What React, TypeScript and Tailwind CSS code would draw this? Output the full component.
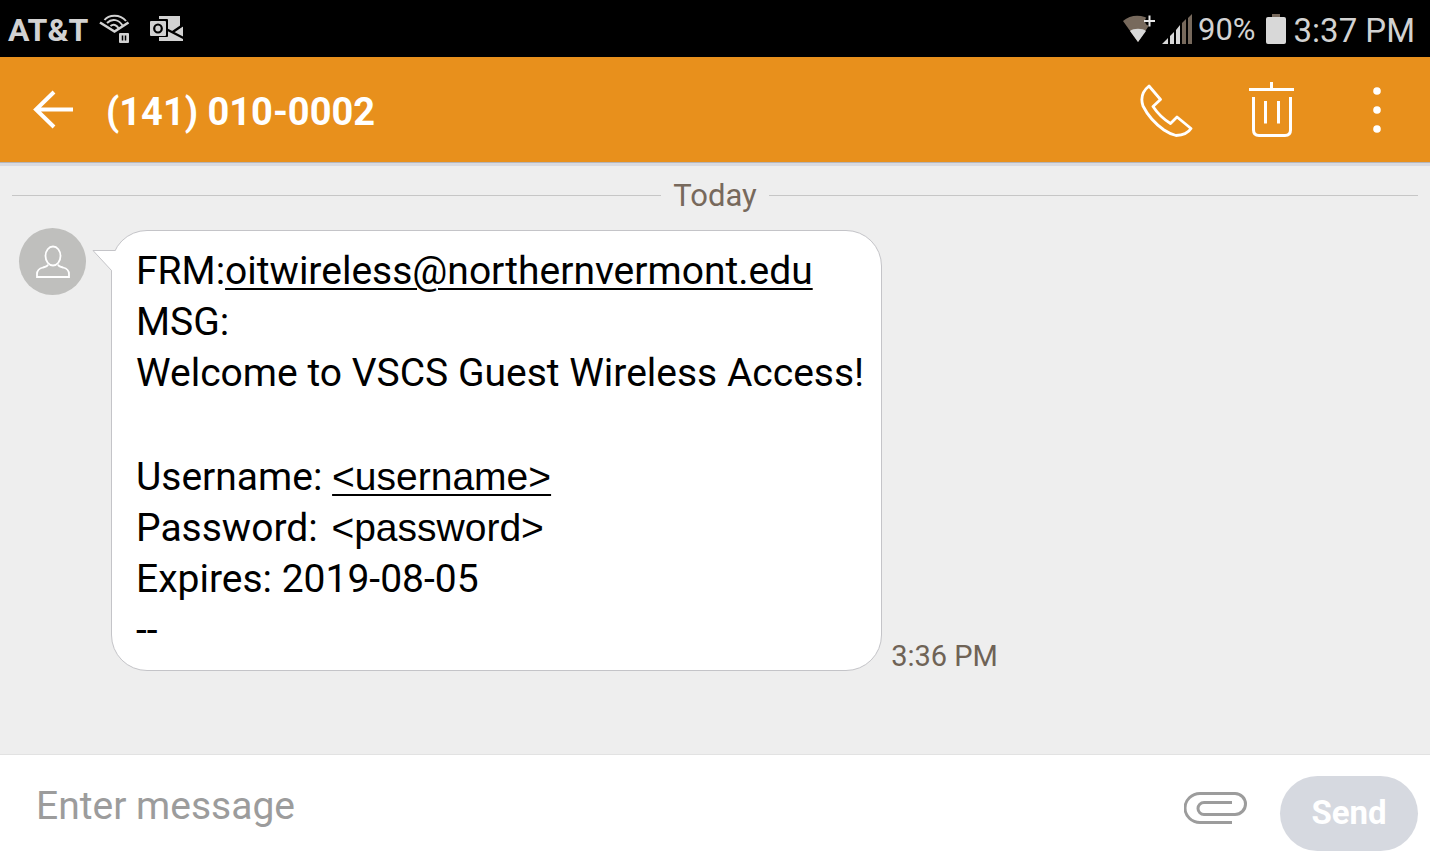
import { useState } from 'react';

function StatusBar() {
  return (
    <div className="flex h-[57px] items-center justify-between bg-black pl-2 pr-[15px] text-[#d2d2d2]">
      <div className="flex items-center">
        <span className="pt-[2px] text-[32px] font-bold leading-10">AT&amp;T</span>
        {/* Wi-Fi paused */}
        <svg className="ml-[11px] h-8 w-8" viewBox="0 0 32 32" fill="none" stroke="currentColor" strokeWidth="2">
          <path d="M1 9.500 15.500 18.500 29.500 9.500" strokeWidth="2.600" />
          <path d="M5.500 7C9.500 1.500 21 0.500 27 8" />
          <path d="M8 10C13 5 20 6.500 23.500 12.500" />
          <path d="M11.500 13C14.500 10.500 17.500 12 19.500 15" />
          <rect x="20" y="20" width="10" height="10" rx="1" fill="currentColor" stroke="none" />
          <path d="M23.500 22.500v5M26.500 22.500v5" stroke="#000" strokeWidth="1.500" />
        </svg>
        {/* Outlook */}
        <svg className="ml-[19px] h-8 w-8 overflow-visible" viewBox="0 0 32 32">
          <path d="M9 3h21v12l3-2v15H9z" fill="currentColor" />
          <path d="M16 16 33.500 25M22 19.500 33 12" stroke="#000" strokeWidth="2.400" />
          <rect x="-1" y="6" width="19" height="18" rx="1" fill="#000" />
          <rect x="0" y="8" width="16" height="15" rx="1" fill="currentColor" />
          <ellipse cx="8" cy="15.500" rx="3.800" ry="4" fill="none" stroke="#000" strokeWidth="2.200" />
        </svg>
      </div>
      <div className="flex items-center">
        <svg className="h-8 w-8 overflow-visible" viewBox="0 0 32 32">
          <path d="M0 8C8 1 20 1 29 8L15 29z" fill="#77695c" />
          <path d="M7 18C10 15 20 15 23 18L15 29z" fill="#d8d8d8" />
          <circle cx="27" cy="8" r="5" fill="#000" />
          <path d="M26.500 2.500v11M21 8h11" stroke="#e8e8e8" strokeWidth="2" />
        </svg>
        <svg className="ml-[7px] h-8 w-8" viewBox="0 0 32 32" fill="#d8d8d8">
          <path d="M0 31 6 25v6zM8 23l4-4v12H8zM14 17l4-5v19h-4z" />
          <path d="M20 10l4-4v25h-4zM26 5l4-4v30h-4z" fill="#77695c" />
        </svg>
        <span className="ml-1 pt-[2px] text-[31px] leading-10">90%</span>
        <svg className="ml-[10px] h-8 w-5" viewBox="0 0 20 32">
          <path d="M6 1h8v4H6z" fill="#77695c" />
          <rect x="0" y="4" width="20" height="27" rx="2" fill="#d8d8d8" />
        </svg>
        <span className="ml-2 pt-1 text-[33px] leading-10">3:37 PM</span>
      </div>
    </div>
  );
}

function Header() {
  return (
    <header className="relative z-10 flex h-[105px] items-center bg-[#e8901c] pr-[45px] pl-8 text-white shadow-[0_1px_0_#b5b5b9,0_4px_0_#d8dae1]">
      <button type="button" aria-label="Back">
        <svg className="h-12 w-11" viewBox="0 0 44 48" fill="none" stroke="currentColor" strokeWidth="4">
          <path d="M41 23.500H4M22 6 4 23.500 22 41" />
        </svg>
      </button>
      <h1 className="ml-[30px] flex-1 pt-1 text-[38px] leading-[52px] font-bold">(141) 010-0002</h1>
      <div className="flex items-center">
        <button type="button" aria-label="Call">
          <svg className="h-14 w-14" viewBox="0 0 56 56" fill="none" stroke="currentColor" strokeWidth="2.800" strokeLinejoin="round">
            <path d="M9 4 20.500 17.500 13 24.500Q20 35 30.500 41.500L37 35 51 46.500Q47 53 36 53.500Q30 52 24 48Q10 38 3 24Q-1 12 9 4z" />
          </svg>
        </button>
        <button type="button" aria-label="Delete" className="ml-[53px]">
          <svg className="h-14 w-12" viewBox="0 0 48 56" fill="none" stroke="currentColor" strokeWidth="3">
            <path d="M0 7.500h45M22.500 0v7.500M4.500 15v33Q4.500 53.500 10 53.500H36Q41.500 53.500 41.500 48V15M16.500 19v22.500M29.500 19v22.500" />
          </svg>
        </button>
        <button type="button" aria-label="More options" className="ml-[72px]">
          <svg className="h-14 w-4" viewBox="0 0 16 56" fill="currentColor">
            <circle cx="8" cy="9" r="3.800" />
            <circle cx="8" cy="28" r="3.800" />
            <circle cx="8" cy="47" r="3.800" />
          </svg>
        </button>
      </div>
    </header>
  );
}

function Message() {
  return (
    <div className="flex items-end pl-[19px]">
      <div className="mr-[25px] flex size-[67px] shrink-0 items-center justify-center self-start rounded-full bg-[#bfbfbd]">
        <svg className="size-9" viewBox="0 0 36 36" fill="none" stroke="#fff" strokeWidth="1.800">
          <ellipse cx="18" cy="12" rx="7.500" ry="9.500" />
          <path d="M13 20.500Q12.500 22.500 8 23.500Q2 25 2 30v3h32v-3Q34 25 28 23.500Q23.500 22.500 23 20.500" />
        </svg>
      </div>
      <div className="relative mt-[2px] rounded-[36px] border border-[#c4c4c8] bg-white pt-[15px] pr-[17px] pb-[14px] pl-6 text-[39px] leading-[51px] text-black">
        <svg className="absolute top-[18px] -left-5 h-6 w-8" viewBox="0 0 32 24">
          <path d="M24 1.500H1L19.500 21.500 23 22 32 2z" fill="#fff" />
          <path d="M23.500 1.500H1L19.500 21.500V24" fill="none" stroke="#c4c4c8" />
        </svg>
        <p>
          FRM:
          <a href="mailto:oitwireless@northernvermont.edu" className="underline decoration-2 underline-offset-4">
            oitwireless@northernvermont.edu
          </a>
        </p>
        <p>MSG:</p>
        <p>Welcome to VSCS Guest Wireless Access!</p>
        <p className="mt-[53px]">
          Username:{' '}
          <a href="#username" className="font-['Liberation_Sans',sans-serif] leading-none underline decoration-2 underline-offset-4">
            &lt;username&gt;
          </a>
        </p>
        <p>
          Password:{' '}
          <span className="ml-1 font-['Liberation_Sans',sans-serif] leading-none">&lt;password&gt;</span>
        </p>
        <p>Expires: 2019-08-05</p>
        <p>--</p>
      </div>
      <time className="ml-[9px] text-[29px] leading-[30px] text-[#6f6356]">3:36 PM</time>
    </div>
  );
}

function Composer() {
  const [text, setText] = useState('');

  return (
    <form
      className="flex h-[107px] items-center border-t border-[#e2e2e2] bg-white pr-3 pl-9"
      onSubmit={(e: React.FormEvent) => {
        e.preventDefault();
        setText('');
      }}
    >
      <input
        type="text"
        aria-label="Message"
        placeholder="Enter message"
        className="h-14 min-w-0 flex-1 bg-transparent pb-1 text-[39px] outline-none placeholder:text-[#9c9c9c]"
        value={text}
        onChange={e => setText(e.target.value)}
      />
      <button type="button" aria-label="Attach file">
        <svg className="h-9 w-16" viewBox="0 0 64 36" fill="none" stroke="#9c9c9c" strokeWidth="3">
          <path d="M48 32.500H16A15 14.500 0 0 1 16 3.500H51A10 10 0 0 1 51 24.500H20A5.500 5.500 0 0 1 20 12.500H48" />
        </svg>
      </button>
      <button type="submit" className="mt-[10px] ml-8 h-[75px] w-[138px] rounded-full bg-[#d6d9e0] text-[33px] font-bold text-white">
        Send
      </button>
    </form>
  );
}

export default function App() {
  return (
    <div className="flex min-h-screen flex-col bg-[#eeeeee] font-[Roboto,sans-serif]">
      <StatusBar />
      <Header />
      <main className="flex-1 pt-3">
        <div className="flex items-center gap-3 px-3">
          <div className="h-px flex-1 bg-[#c6c6c6]" />
          <span className="pt-[2px] text-[31px] leading-10 text-[#77695c]">Today</span>
          <div className="h-px flex-1 bg-[#c6c6c6]" />
        </div>
        <div className="mt-3">
          <Message />
        </div>
      </main>
      <Composer />
    </div>
  );
}
